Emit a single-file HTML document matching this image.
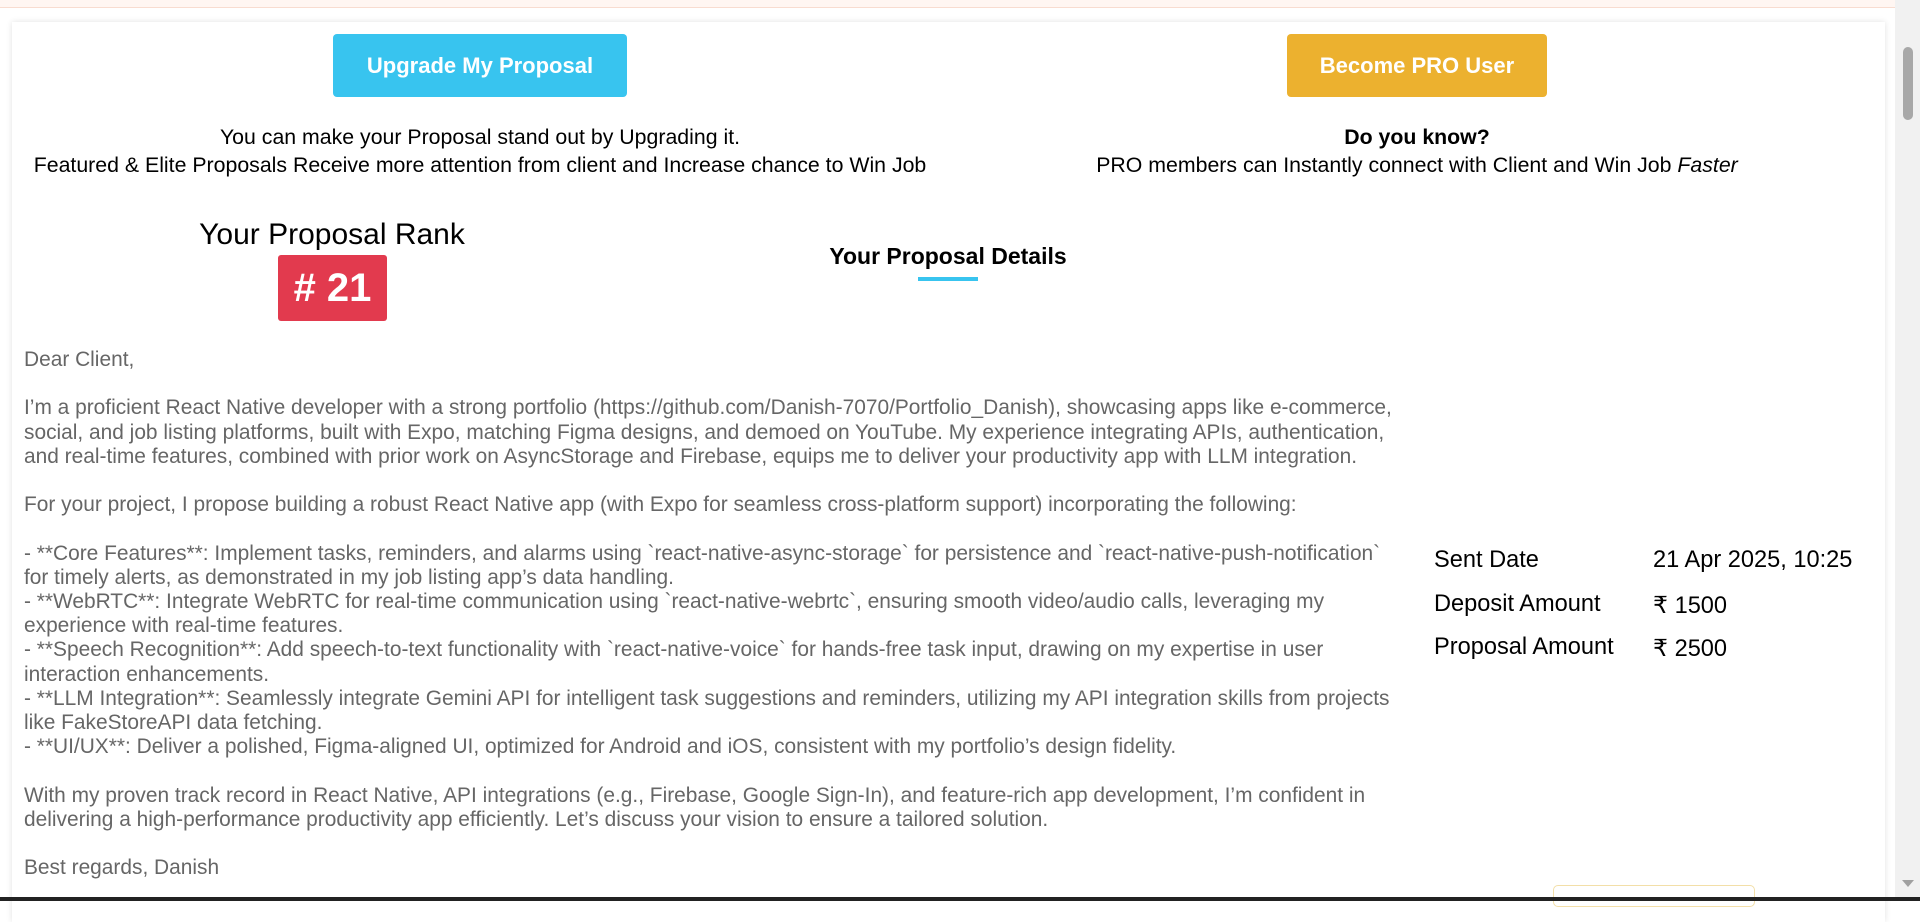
<!DOCTYPE html>
<html><head><meta charset="utf-8"><style>
html,body{margin:0;padding:0;width:1920px;height:901px;overflow:hidden;background:#fff;font-family:"Liberation Sans",Arial,sans-serif;}
.topbar{position:absolute;left:0;top:0;width:1920px;height:7px;background:#fff6f2;border-bottom:1px solid #f8dcd0;}
.card{position:absolute;left:12px;top:22px;width:1873px;height:900px;background:#fff;box-shadow:0 0 6px rgba(0,0,0,0.12);}
.btn{position:absolute;top:34px;height:63px;border-radius:4px;color:#fff;font-weight:bold;font-size:22px;display:flex;align-items:center;justify-content:center;}
.c{position:absolute;text-align:center;color:#000;font-size:21.3px;white-space:nowrap;}
.body{position:absolute;left:24px;top:348px;font-size:20.9px;line-height:24.2px;color:#666;white-space:pre;}
.tbl{position:absolute;left:1434px;font-size:23.6px;color:#000;white-space:nowrap;}
.sb{position:absolute;left:1895px;top:0;width:25px;height:897px;background:#f1f1f1;}
</style></head><body>
<div class="topbar"></div>
<div class="card"></div>
<div class="btn" style="left:333px;width:294px;background:#38c4ef;">Upgrade My Proposal</div>
<div class="btn" style="left:1287px;width:260px;background:#ecb12f;">Become PRO User</div>
<div class="c" style="left:30px;width:900px;top:123px;line-height:28px;">You can make your Proposal stand out by Upgrading it.<br>Featured &amp; Elite Proposals Receive more attention from client and Increase chance to Win Job</div>
<div class="c" style="left:967px;width:900px;top:123px;line-height:28px;"><b>Do you know?</b><br>PRO members can Instantly connect with Client and Win Job <i>Faster</i></div>
<div class="c" style="left:132px;width:400px;top:218px;font-size:30px;">Your Proposal Rank</div>
<div style="position:absolute;left:278px;top:255px;width:109px;height:66px;background:#e23a4e;border-radius:3px;color:#fff;font-weight:bold;font-size:40px;display:flex;align-items:center;justify-content:center;"># 21</div>
<div class="c" style="left:748px;width:400px;top:243px;font-size:23px;font-weight:bold;">Your Proposal Details</div>
<div style="position:absolute;left:918px;top:277px;width:60px;height:4px;background:#38c4ef;"></div>
<div class="body">Dear Client,

I’m a proficient React Native developer with a strong portfolio (https://github.com/Danish-7070/Portfolio_Danish), showcasing apps like e-commerce,
social, and job listing platforms, built with Expo, matching Figma designs, and demoed on YouTube. My experience integrating APIs, authentication,
and real-time features, combined with prior work on AsyncStorage and Firebase, equips me to deliver your productivity app with LLM integration.

For your project, I propose building a robust React Native app (with Expo for seamless cross-platform support) incorporating the following:

- **Core Features**: Implement tasks, reminders, and alarms using `react-native-async-storage` for persistence and `react-native-push-notification`
for timely alerts, as demonstrated in my job listing app’s data handling.
- **WebRTC**: Integrate WebRTC for real-time communication using `react-native-webrtc`, ensuring smooth video/audio calls, leveraging my
experience with real-time features.
- **Speech Recognition**: Add speech-to-text functionality with `react-native-voice` for hands-free task input, drawing on my expertise in user
interaction enhancements.
- **LLM Integration**: Seamlessly integrate Gemini API for intelligent task suggestions and reminders, utilizing my API integration skills from projects
like FakeStoreAPI data fetching.
- **UI/UX**: Deliver a polished, Figma-aligned UI, optimized for Android and iOS, consistent with my portfolio’s design fidelity.

With my proven track record in React Native, API integrations (e.g., Firebase, Google Sign-In), and feature-rich app development, I’m confident in
delivering a high-performance productivity app efficiently. Let’s discuss your vision to ensure a tailored solution.

Best regards, Danish</div>
<div class="tbl" style="top:547px;">Sent Date</div><div class="tbl" style="left:1653px;top:547px;">21 Apr 2025, 10:25</div>
<div class="tbl" style="top:591px;">Deposit Amount</div><div class="tbl" style="left:1653px;top:591px;">₹ 1500</div>
<div class="tbl" style="top:634px;">Proposal Amount</div><div class="tbl" style="left:1653px;top:634px;">₹ 2500</div>
<div style="position:absolute;left:1553px;top:885px;width:200px;height:20px;border:1px solid #f3dfa8;border-radius:5px;"></div>
<div class="sb"><div style="position:absolute;left:8px;top:47px;width:10px;height:73px;background:#a8a8a8;border-radius:5px;"></div>
<div style="position:absolute;left:7px;top:880px;width:0;height:0;border-left:6px solid transparent;border-right:6px solid transparent;border-top:7px solid #a0a0a0;"></div></div>
<div style="position:absolute;left:0;top:897px;width:1920px;height:4px;background:#222;"></div>
</body></html>
